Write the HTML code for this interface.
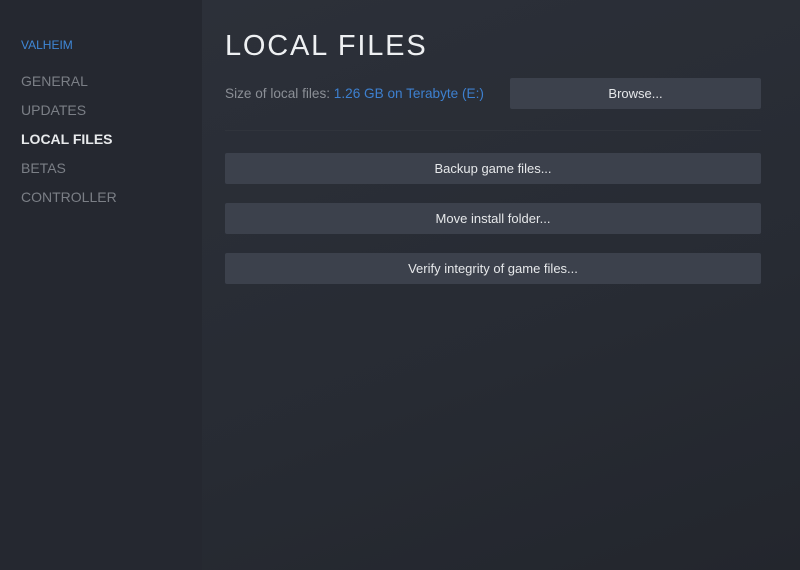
<!DOCTYPE html>
<html><head><style>
body{margin:0;width:800px;height:570px;overflow:hidden;font-family:"Liberation Sans",sans-serif;background:#23262e;position:relative}
.side{position:absolute;left:0;top:0;width:202px;height:570px;background:#252830}
.main{position:absolute;left:202px;top:0;width:598px;height:570px;background:linear-gradient(160deg,#2c3039 0%,#272b33 60%,#23262d 100%)}
.nav{position:absolute;left:21px;font-size:14px;color:#7b7f86}
.btn{position:absolute;background:#3c414c;color:#e6e8ea;font-size:13px;text-align:center;border-radius:2px;height:31px;line-height:31px}
</style></head><body>
<div class="side">
<div class="nav" style="top:38px;font-size:12px;color:#3f87d6">VALHEIM</div>
<div class="nav" style="top:73px">GENERAL</div>
<div class="nav" style="top:102px">UPDATES</div>
<div class="nav" style="top:131px;color:#e8eaec;font-weight:bold">LOCAL FILES</div>
<div class="nav" style="top:160px">BETAS</div>
<div class="nav" style="top:189px">CONTROLLER</div>
</div>
<div class="main"></div>
<div style="position:absolute;left:225px;top:30px;font-size:29px;color:#eef0f2;letter-spacing:1.8px">LOCAL FILES</div>
<div style="position:absolute;left:225px;top:86px;font-size:13.6px;color:#8b8f96">Size of local files: <span style="color:#3d80d0">1.26 GB on Terabyte (E:)</span></div>
<div class="btn" style="left:510px;top:78px;width:251px">Browse...</div>
<div style="position:absolute;left:225px;top:130px;width:536px;height:1px;background:#30343c"></div>
<div class="btn" style="left:225px;top:153px;width:536px">Backup game files...</div>
<div class="btn" style="left:225px;top:203px;width:536px">Move install folder...</div>
<div class="btn" style="left:225px;top:253px;width:536px">Verify integrity of game files...</div>
</body></html>
